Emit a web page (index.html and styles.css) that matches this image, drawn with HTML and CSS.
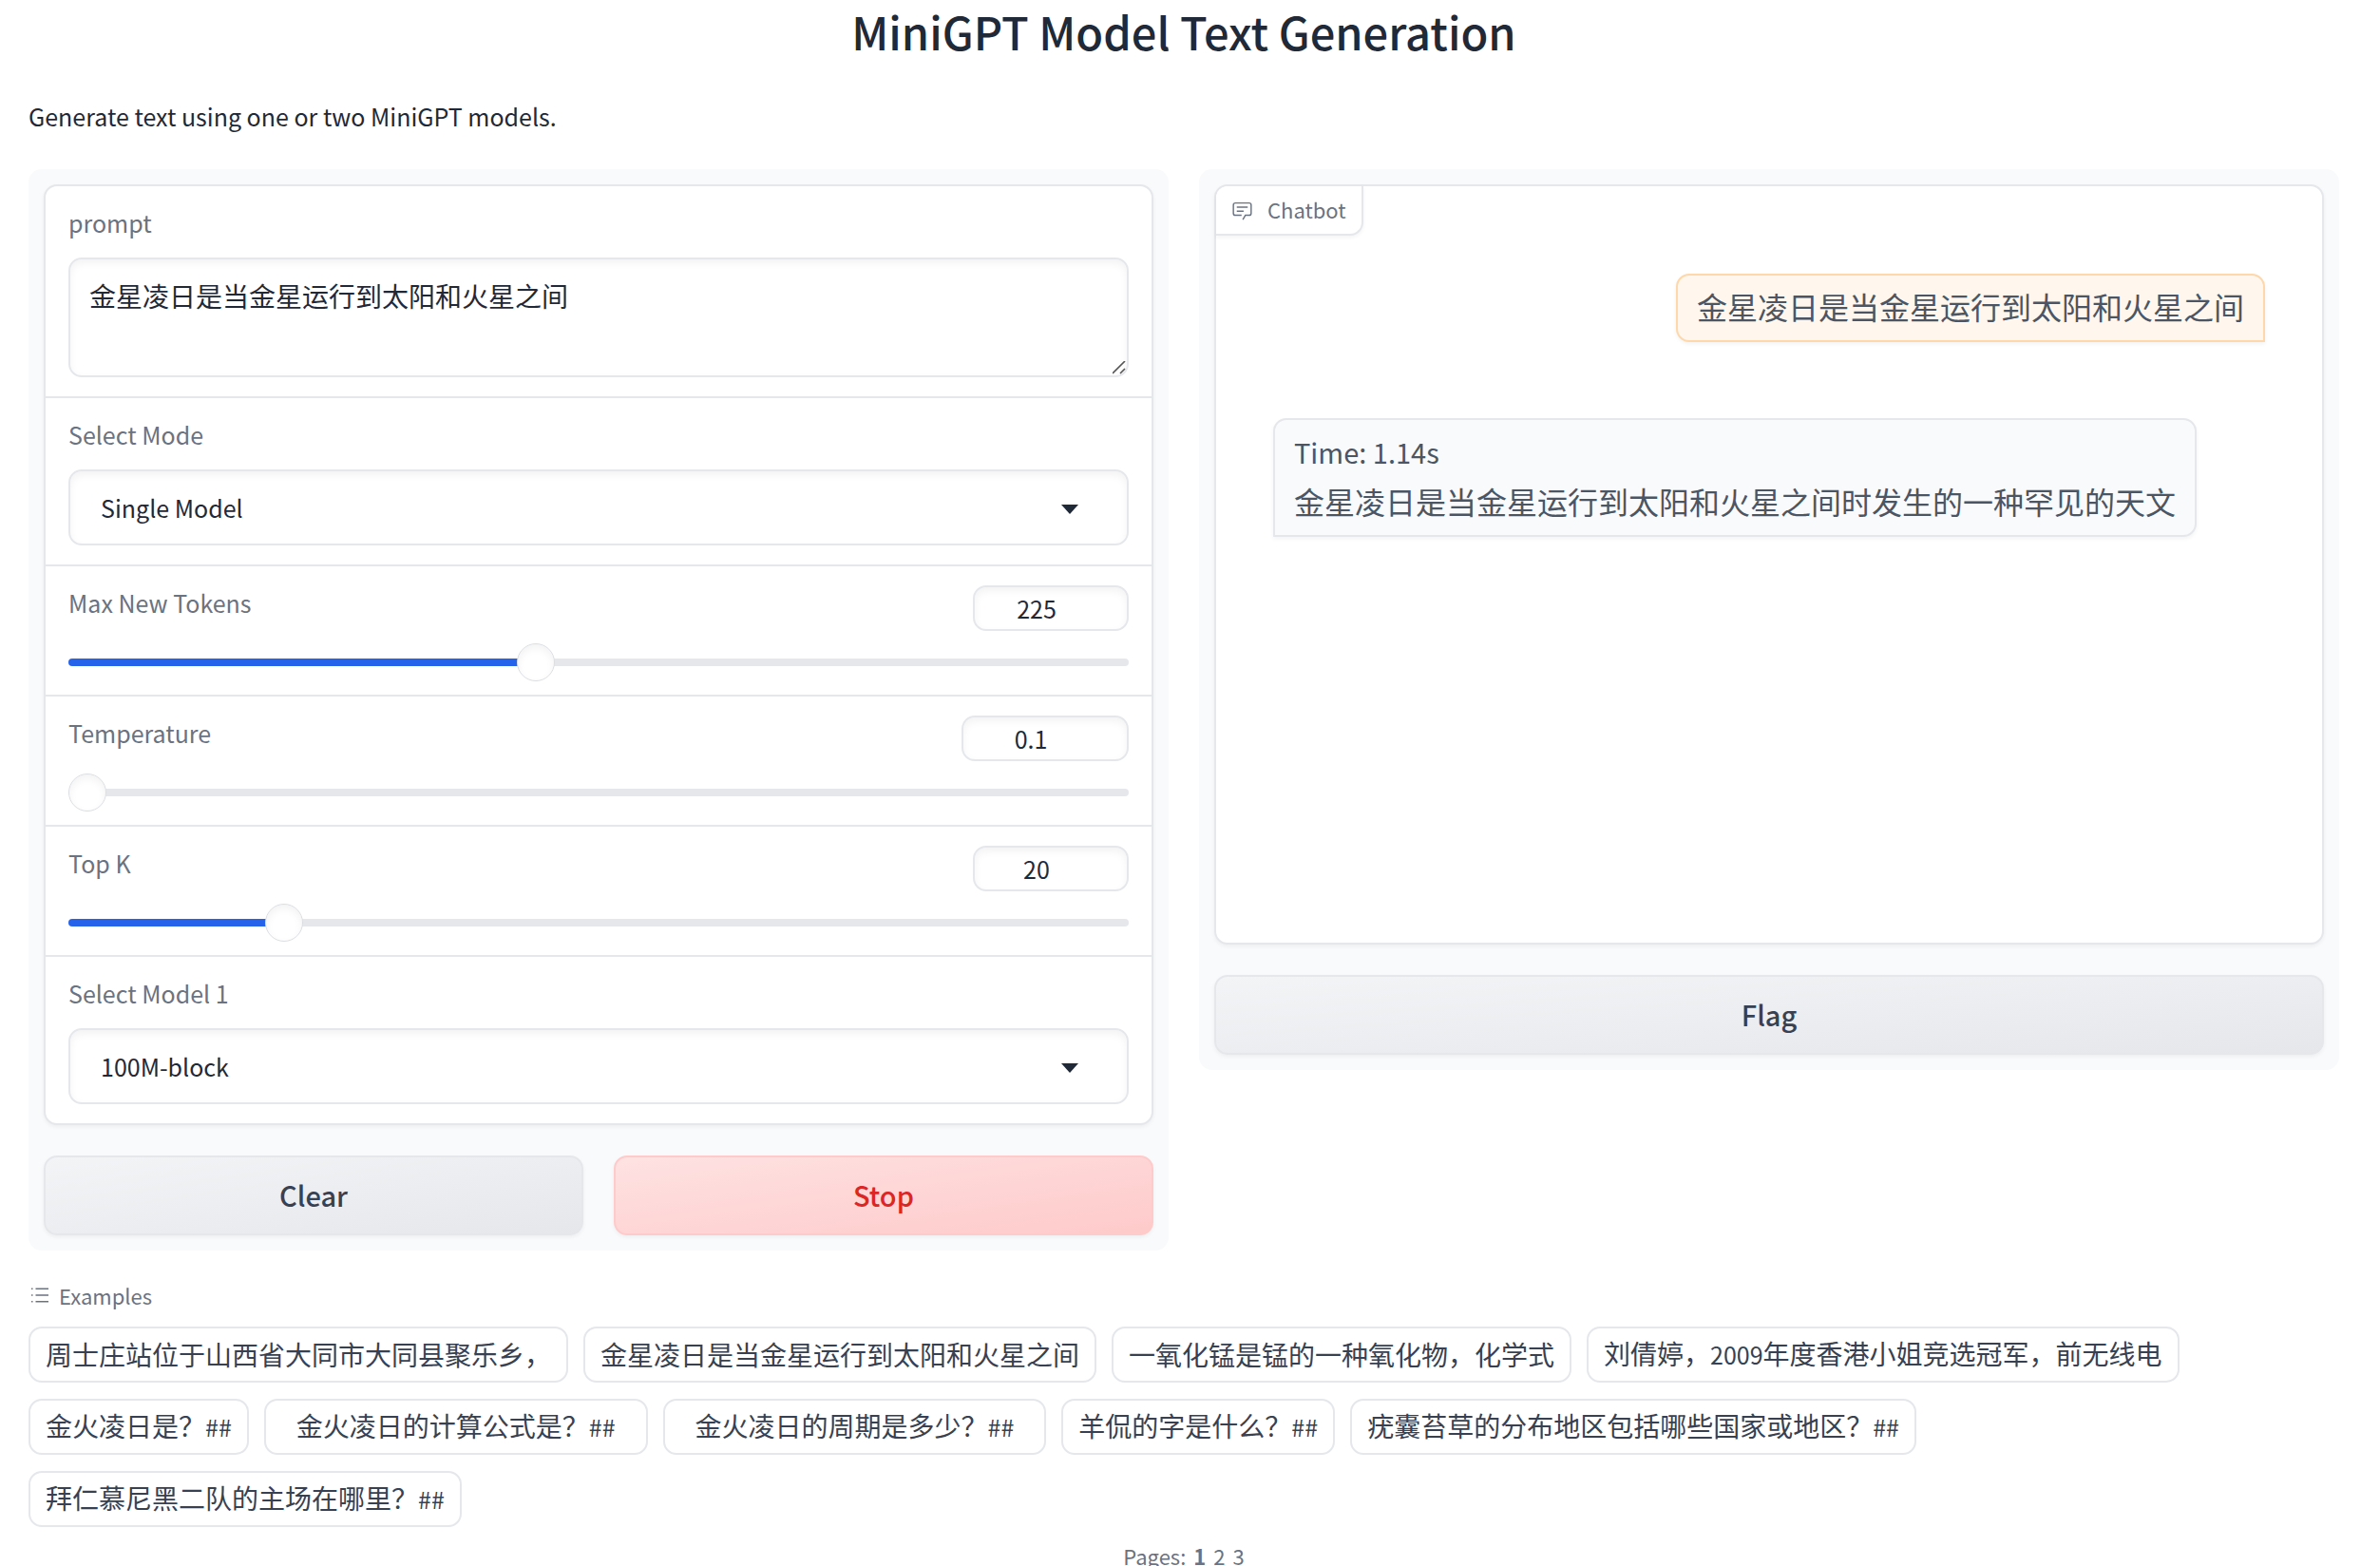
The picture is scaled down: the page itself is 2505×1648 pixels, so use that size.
FILE: index.html
```html
<!DOCTYPE html>
<html lang="zh-CN">
<head>
<meta charset="utf-8">
<meta name="viewport" content="width=device-width, initial-scale=1">
<title>MiniGPT Model Text Generation</title>
<link rel="stylesheet" href="styles.css">
</head>
<body>
<main class="app">
  <h1 class="title">MiniGPT Model Text Generation</h1>
  <p class="description">Generate text using one or two MiniGPT models.</p>

  <div class="columns">
    <section class="panel">
      <form class="card form">
        <div class="field">
          <label class="label" for="prompt">prompt</label>
          <textarea class="input textarea" id="prompt" rows="2">金星凌日是当金星运行到太阳和火星之间</textarea>
        </div>
        <div class="field">
          <label class="label" for="mode">Select Mode</label>
          <select class="input select" id="mode"><option>Single Model</option></select>
        </div>
        <div class="field field--slider">
          <div class="slider-head">
            <label class="label" for="tokens">Max New Tokens</label>
            <input class="input number" type="number" aria-label="Max New Tokens value" value="225">
          </div>
          <input class="slider" id="tokens" type="range" min="1" max="512" value="225" style="--fill:44%">
        </div>
        <div class="field field--slider">
          <div class="slider-head">
            <label class="label" for="temperature">Temperature</label>
            <input class="input number number--wide" type="number" step="0.1" aria-label="Temperature value" value="0.1">
          </div>
          <input class="slider" id="temperature" type="range" min="0.1" max="1" step="0.1" value="0.1" style="--fill:0%">
        </div>
        <div class="field field--slider">
          <div class="slider-head">
            <label class="label" for="topk">Top K</label>
            <input class="input number" type="number" aria-label="Top K value" value="20">
          </div>
          <input class="slider" id="topk" type="range" min="1" max="100" value="20" style="--fill:19%">
        </div>
        <div class="field">
          <label class="label" for="model">Select Model 1</label>
          <select class="input select" id="model"><option>100M-block</option></select>
        </div>
      </form>
      <div class="actions">
        <button class="button" type="button">Clear</button>
        <button class="button button--stop" type="button">Stop</button>
      </div>
    </section>

    <section class="panel">
      <div class="card chat">
        <div class="chat-label">
          <svg class="chat-icon" viewBox="0 0 32 32" aria-hidden="true"><path d="M17.74 30L16 29l4-7h6a2 2 0 0 0 2-2V8a2 2 0 0 0-2-2H6a2 2 0 0 0-2 2v12a2 2 0 0 0 2 2h9v2H6a4 4 0 0 1-4-4V8a4 4 0 0 1 4-4h20a4 4 0 0 1 4 4v12a4 4 0 0 1-4 4h-4.84Z"/><path d="M8 10h16v2H8zm0 6h10v2H8z"/></svg>
          <span class="chat-name">Chatbot</span>
        </div>
        <div class="messages">
          <p class="message message--user">金星凌日是当金星运行到太阳和火星之间</p>
          <p class="message message--bot"><span class="latin">Time: 1.14s</span><br>金星凌日是当金星运行到太阳和火星之间时发生的一种罕见的天文</p>
        </div>
      </div>
      <div class="actions">
        <button class="button" type="button">Flag</button>
      </div>
    </section>
  </div>

  <section class="examples">
    <h2 class="examples-label">
      <svg class="list-icon" viewBox="0 0 32 32" aria-hidden="true"><path d="M10 6h18v2H10zm0 18h18v2H10zm0-9h18v2H10zm-6 0h2v2H4zm0-9h2v2H4zm0 18h2v2H4z"/></svg>
      <span>Examples</span>
    </h2>
    <div class="gallery">
      <button class="chip" type="button">周士庄站位于山西省大同市大同县聚乐乡，</button>
      <button class="chip" type="button">金星凌日是当金星运行到太阳和火星之间</button>
      <button class="chip" type="button">一氧化锰是锰的一种氧化物，化学式</button>
      <button class="chip" type="button">刘倩婷，<span class="latin">2009</span>年度香港小姐竞选冠军，前无线电</button>
      <button class="chip" type="button">金火凌日是？<span class="latin">##</span></button>
      <button class="chip chip--wide" type="button">金火凌日的计算公式是？<span class="latin">##</span></button>
      <button class="chip chip--wide" type="button">金火凌日的周期是多少？<span class="latin">##</span></button>
      <button class="chip" type="button">羊侃的字是什么？<span class="latin">##</span></button>
      <button class="chip" type="button">疣囊苔草的分布地区包括哪些国家或地区？<span class="latin">##</span></button>
      <button class="chip" type="button">拜仁慕尼黑二队的主场在哪里？<span class="latin">##</span></button>
    </div>
    <nav class="pages" aria-label="Pages">
      <span>Pages:</span>
      <button class="page page--current" type="button">1</button>
      <button class="page" type="button">2</button>
      <button class="page" type="button">3</button>
    </nav>
  </section>
</main>
</body>
</html>
```

FILE: styles.css
```css
:root {
  --border: #e5e7eb;
  --panel: #f9fafb;
  --text: #1f2937;
  --muted: #6b7280;
  --radius: 14px;
  --inset: inset 0 4px 8px rgba(0, 0, 0, 0.05);
  --drop: 0 2px 4px rgba(0, 0, 0, 0.05);
}

* {
  box-sizing: border-box;
}

body {
  margin: 0;
  background: #fff;
  color: var(--text);
  font: 25px/36px "Noto Sans CJK SC", "Noto Sans", sans-serif;
}

button,
input,
select,
textarea {
  font: inherit;
  color: inherit;
}

.app {
  padding: 3px 43px 0 30px;
}

.title {
  margin: 0;
  font-size: 47px;
  font-weight: 500;
  line-height: 60px;
  text-align: center;
}

.description {
  margin: 41px 0 38px;
}

.columns {
  display: grid;
  grid-template-columns: 1fr 1fr;
  align-items: start;
  gap: 32px;
}

.panel {
  display: flex;
  flex-direction: column;
  gap: 32px;
  padding: 16px;
  border-radius: var(--radius);
  background: var(--panel);
}

.card {
  border: 2px solid var(--border);
  border-radius: var(--radius);
  background: #fff;
  box-shadow: var(--drop);
}

.field {
  display: flex;
  flex-direction: column;
  gap: 19px;
  padding: 20px 24px;
}

.field + .field {
  border-top: 2px solid var(--border);
}

.field--slider {
  gap: 13px;
  padding-bottom: 14px;
}

.label {
  color: var(--muted);
}

.input {
  border: 2px solid var(--border);
  border-radius: var(--radius);
  background-color: #fff;
  box-shadow: var(--inset);
  outline: none;
}

.textarea {
  width: 100%;
  height: 126px;
  padding: 17px 20px;
  font-size: 28px;
  line-height: 42px;
  resize: vertical;
}

.textarea::-webkit-resizer {
  background: url("data:image/svg+xml,%3Csvg xmlns='http://www.w3.org/2000/svg' viewBox='0 0 15 15'%3E%3Cpath d='M0 13L13 0M8 13L13 8' stroke='%23555' stroke-width='1.6'/%3E%3C/svg%3E") no-repeat center / 15px 15px;
}

.select {
  width: 100%;
  height: 80px;
  padding: 0 32px;
  appearance: none;
  background-image: url("data:image/svg+xml,%3Csvg xmlns='http://www.w3.org/2000/svg' viewBox='0 0 18 10'%3E%3Cpath d='M0 0H18L9 10Z' fill='%231f2937'/%3E%3C/svg%3E");
  background-repeat: no-repeat;
  background-position: right 51px top 35px;
  background-size: 18px 10px;
}

.slider-head {
  display: flex;
  justify-content: space-between;
  align-items: flex-start;
}

.number {
  width: 164px;
  height: 48px;
  padding: 0 30px 0 0;
  text-align: center;
  appearance: textfield;
}

.number--wide {
  width: 176px;
}

.number::-webkit-inner-spin-button {
  display: none;
}

.slider {
  width: 100%;
  height: 40px;
  margin: 0;
  appearance: none;
  background: none;
}

.slider::-webkit-slider-runnable-track {
  height: 8px;
  border-radius: 4px;
  background: linear-gradient(to right, #2563eb var(--fill), var(--border) var(--fill));
}

.slider::-webkit-slider-thumb {
  width: 40px;
  height: 40px;
  margin-top: -16px;
  appearance: none;
  border: 1px solid #dcdee2;
  border-radius: 50%;
  background: #fff;
  box-shadow: var(--inset);
}

.actions {
  display: flex;
  gap: 32px;
}

.button {
  flex: 1;
  height: 84px;
  padding: 0 0 2px;
  border: 2px solid var(--border);
  border-radius: var(--radius);
  background: linear-gradient(to bottom right, #f3f4f6, #e5e7eb);
  box-shadow: var(--drop);
  color: #374151;
  font-size: 29px;
  font-weight: 500;
}

.button--stop {
  border-color: #fecaca;
  background: linear-gradient(to bottom right, #fee2e2, #fecaca);
  color: #dc2626;
}

.chat {
  position: relative;
  min-height: 800px;
}

/* Floats over the message list, flush with the card's corner */
.chat-label {
  position: absolute;
  top: 0;
  left: 0;
  display: flex;
  align-items: center;
  gap: 15px;
  height: 52px;
  padding: 0 16px;
  border: solid var(--border);
  border-width: 0 2px 2px 0;
  border-radius: 12px 0 var(--radius) 0;
  background: #fff;
  box-shadow: var(--drop);
  color: var(--muted);
  font-size: 22px;
}

.chat-icon {
  width: 23px;
  height: 23px;
  fill: currentColor;
}

.chat-name {
  padding-bottom: 2px;
}

.messages {
  display: flex;
  flex-direction: column;
  gap: 80px;
  padding: 92px 60px 60px;
}

.message {
  margin: 0;
  padding: 6px 20px 10px;
  border: 2px solid var(--border);
  border-radius: var(--radius);
  box-shadow: var(--drop);
  color: #4b5563;
  font-size: 32px;
  line-height: 52px;
}

.message .latin {
  font-size: 29px;
}

.message--user {
  align-self: flex-end;
  border-color: #fed7aa;
  border-bottom-right-radius: 0;
  background: #fff7ed;
}

.message--bot {
  align-self: flex-start;
  border-bottom-left-radius: 0;
  background: var(--panel);
}

.examples {
  padding-top: 31px;
}

.examples-label {
  display: flex;
  align-items: center;
  gap: 8px;
  margin: 0 0 17px;
  color: var(--muted);
  font-size: 22px;
  font-weight: 400;
  line-height: 32px;
}

.list-icon {
  width: 24px;
  height: 24px;
  fill: currentColor;
}

.gallery {
  display: flex;
  flex-wrap: wrap;
  gap: 17px 16px;
}

.chip {
  height: 59px;
  padding: 0 16px 2px;
  border: 2px solid var(--border);
  border-radius: var(--radius);
  background: #fff;
  color: #374151;
  font-size: 28px;
}

.chip--wide {
  padding: 0 32px 2px;
}

.chip .latin {
  font-size: 25px;
}

.pages {
  display: flex;
  justify-content: center;
  gap: 8px;
  padding-top: 19px;
  color: var(--muted);
  font-size: 22px;
  line-height: 22px;
}

.page {
  padding: 0;
  border: 0;
  background: none;
}

.page--current {
  font-weight: 600;
}
```
